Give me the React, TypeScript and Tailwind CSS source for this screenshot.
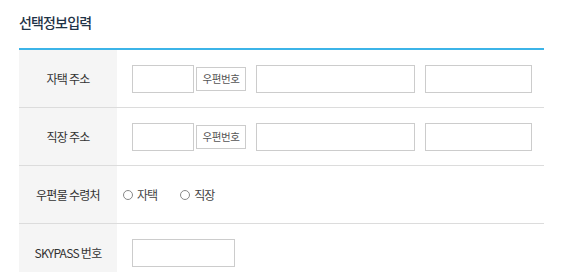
import React from "react";

const font = { fontFamily: '"Noto Sans CJK KR", "Noto Sans", sans-serif' };

function Label({ children }: { children: React.ReactNode }) {
  return (
    <div className="w-[98px] shrink-0 bg-[#f5f5f5] flex items-center justify-center text-[12px] tracking-[-0.06em] text-[#333]">
      {children}
    </div>
  );
}

function AddressRow({ label }: { label: string }) {
  return (
    <div className="flex h-[58px] border-b border-[#dcdcdc]">
      <Label>{label}</Label>
      <div className="flex items-center pl-[15px]">
        <div className="w-[62px] h-[28px] border border-[#cccccc] bg-white" />
        <div className="ml-[2px] w-[50px] h-[24px] border border-[#cccccc] bg-white flex items-center justify-center text-[10.5px] tracking-[-0.04em] text-[#555]">
          우편번호
        </div>
        <div className="ml-[10px] w-[159px] h-[28px] border border-[#cccccc] bg-white" />
        <div className="ml-[10px] w-[107px] h-[28px] border border-[#cccccc] bg-white" />
      </div>
    </div>
  );
}

function Radio({ label }: { label: string }) {
  return (
    <div className="flex items-center">
      <span className="w-[10px] h-[10px] rounded-full border border-[#888] bg-white" />
      <span className="ml-[4px] text-[12px] tracking-[-0.08em] text-[#444]">{label}</span>
    </div>
  );
}

export default function App() {
  return (
    <div className="w-[563px] h-[272px] bg-white overflow-hidden" style={font}>
      <div className="px-[19px]">
        <div className="h-[48px] pt-[12px]">
          <h2 className="text-[14px] leading-[20px] font-medium text-[#1f3347] tracking-[-0.06em]">선택정보입력</h2>
        </div>
        <div className="border-t-2 border-[#3cb4e8]">
          <AddressRow label="자택 주소" />
          <AddressRow label="직장 주소" />
          <div className="flex h-[58px] border-b border-[#dcdcdc]">
            <Label>우편물 수령처</Label>
            <div className="flex items-center pl-[6px] gap-[23px]">
              <Radio label="자택" />
              <Radio label="직장" />
            </div>
          </div>
          <div className="flex h-[58px] border-b border-[#dcdcdc]">
            <Label>SKYPASS 번호</Label>
            <div className="flex items-center pl-[15px]">
              <div className="w-[103px] h-[28px] border border-[#cccccc] bg-white" />
            </div>
          </div>
        </div>
      </div>
    </div>
  );
}
